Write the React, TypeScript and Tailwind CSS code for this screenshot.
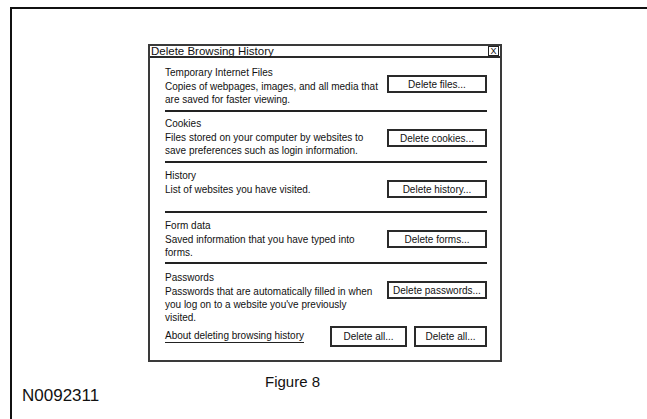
import React from "react";

const sections = [
  {
    title: "Temporary Internet Files",
    lines: ["Copies of webpages, images, and all media that", "are saved for faster viewing."],
    button: "Delete files...",
    box: "h-[54px] border-b-2 border-[#222]",
    pad: "pt-[8px]",
  },
  {
    title: "Cookies",
    lines: ["Files stored on your computer by websites to", "save preferences such as login information."],
    button: "Delete cookies...",
    box: "h-[51px] border-b-2 border-[#222]",
    pad: "pt-[5px]",
  },
  {
    title: "History",
    lines: ["List of websites you have visited."],
    button: "Delete history...",
    box: "h-[50px] border-b-2 border-[#222]",
    pad: "pt-[6px]",
  },
  {
    title: "Form data",
    lines: ["Saved information that you have typed into", "forms."],
    button: "Delete forms...",
    box: "h-[51px] border-b-2 border-[#222]",
    pad: "pt-[6px]",
  },
  {
    title: "Passwords",
    lines: ["Passwords that are automatically filled in when", "you log on to a website you've previously", "visited."],
    button: "Delete passwords...",
    box: "h-[62px]",
    pad: "pt-[7px]",
  },
];

const Button = ({ label, className }: { label: string; className: string }) => (
  <div
    className={
      "flex items-center justify-center border-2 border-[#2a2a2a] bg-white text-[10px] text-[#111] " +
      className
    }
  >
    {label}
  </div>
);

export default function App() {
  return (
    <div
      className="h-screen w-full overflow-hidden bg-white pl-[10px] pt-[7px] text-[#111]"
      style={{ fontFamily: '"Liberation Sans", Arial, sans-serif' }}
    >
      <div className="h-full border-l-2 border-t-2 border-[#111] pt-[35px]">
        {/* dialog */}
        <div className="ml-[136px] w-[354px] border-2 border-[#3a3a3a] bg-white">
          <div className="flex h-[12px] items-center justify-between border-b-2 border-[#2a2a2a] pl-[1px] pr-[1px]">
            <span className="text-[11.5px] leading-[12px]">Delete Browsing History</span>
            <div className="flex h-[10px] w-[11px] items-center justify-center border border-[#222] text-[9px] leading-none">
              X
            </div>
          </div>

          <div className="pl-[15px] pr-[13px]">
            {sections.map((s, i) => (
              <div key={i} className={"flex justify-between " + s.box}>
                <div className={"text-[10px] leading-[13px] " + s.pad}>
                  <div className="mb-[1px]">{s.title}</div>
                  {s.lines.map((l, j) => (
                    <div key={j}>{l}</div>
                  ))}
                </div>
                <Button label={s.button} className="mt-[17px] h-[18px] w-[100px] shrink-0" />
              </div>
            ))}

            <div className="flex items-center justify-between pb-[13px]">
              <span className="border-b border-[#222] text-[10px] leading-[12px]">
                About deleting browsing history
              </span>
              <div className="flex gap-[7px]">
                <Button label="Delete all..." className="h-[21px] w-[77px]" />
                <Button label="Delete all..." className="h-[21px] w-[73px]" />
              </div>
            </div>
          </div>
        </div>

        <div className="flex items-start pl-[10px]">
          <div className="mt-[24px] w-[243px] text-[17px] leading-[19px]">N0092311</div>
          <div className="mt-[11px] text-[15px] leading-[18px]">Figure 8</div>
        </div>
      </div>
    </div>
  );
}
